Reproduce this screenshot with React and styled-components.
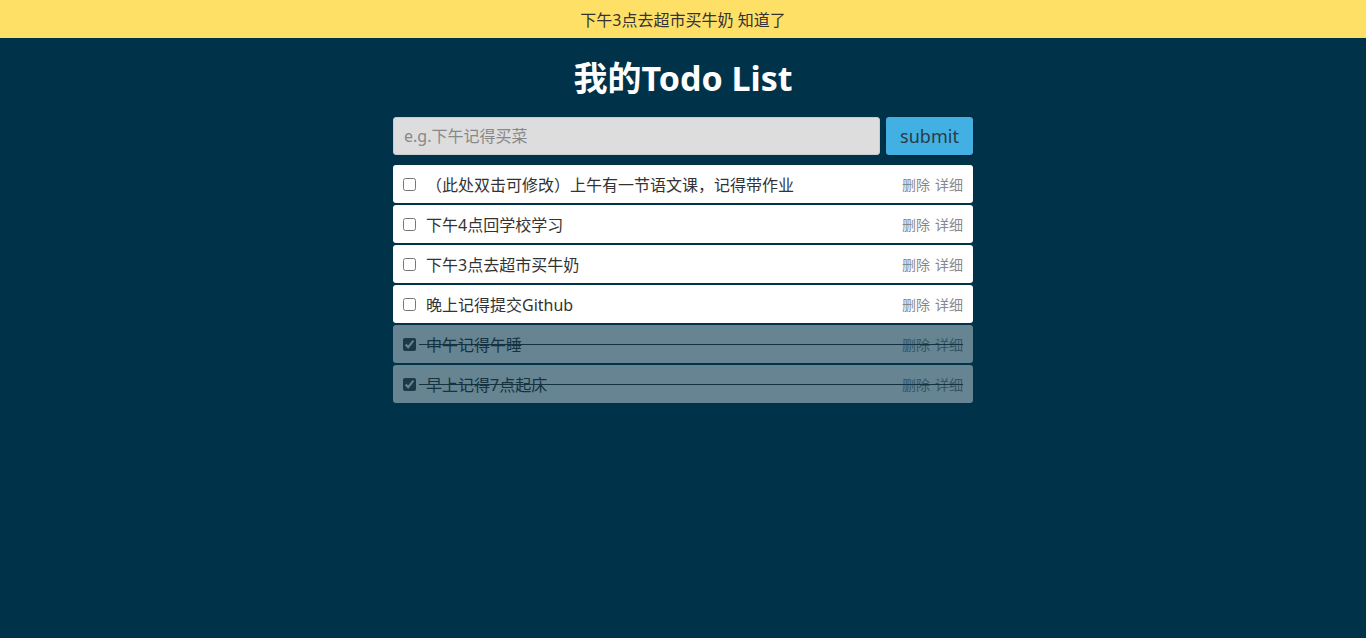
import React, { useState } from 'react'
import styled, { createGlobalStyle } from 'styled-components'

const GlobalStyle = createGlobalStyle`
  html, body {
    margin: 0;
    padding: 0;
    background: #003249;
    font-family: "Noto Sans", "Noto Sans CJK SC", sans-serif;
  }
`

const Page = styled.div`
  min-height: 638px;
  background: #003249;
`

const Notice = styled.div`
  height: 38px;
  background: #ffe066;
  color: #333;
  font-size: 16px;
  display: flex;
  align-items: center;
  justify-content: center;
`

const Container = styled.div`
  width: 580px;
  margin: 0 auto;
`

const Title = styled.h1`
  margin: 0;
  padding-top: 17px;
  height: 62px;
  box-sizing: border-box;
  text-align: center;
  color: #fff;
  font-size: 34px;
  font-weight: 700;
  line-height: 46px;
`

const Form = styled.form`
  display: flex;
  gap: 6px;
  margin-top: 17px;
  margin-bottom: 10px;
`

const Input = styled.input`
  flex: 1;
  height: 38px;
  box-sizing: border-box;
  border: 1px solid #ccc;
  border-radius: 3px;
  background: #ddd;
  padding: 0 10px;
  font-size: 16px;
  font-family: inherit;
  color: #333;
  outline: none;
  &::placeholder {
    color: #888;
  }
`

const Button = styled.button`
  width: 87px;
  height: 38px;
  border: none;
  border-radius: 3px;
  background: #42b0e3;
  color: #2b3b47;
  font-size: 18px;
  font-family: inherit;
  box-shadow: 0 1px 3px rgba(0, 0, 0, 0.35);
  cursor: pointer;
`

const List = styled.ul`
  list-style: none;
  margin: 0;
  padding: 0;
  display: flex;
  flex-direction: column;
  gap: 2px;
`

const Row = styled.li`
  position: relative;
  height: 38px;
  box-sizing: border-box;
  display: flex;
  align-items: center;
  padding: 0 10px;
  background: #fff;
  border-radius: 3px;
  opacity: ${p => (p.$done ? 0.4 : 1)};
  &::after {
    content: '';
    display: ${p => (p.$done ? 'block' : 'none')};
    position: absolute;
    left: 26px;
    right: 10px;
    top: 19px;
    height: 1px;
    background: #333;
  }
`

const Check = styled.input`
  margin: 0;
  width: 13px;
  height: 13px;
  accent-color: #444;
`

const Label = styled.span`
  flex: 1;
  margin-left: 10px;
  font-size: 16px;
  color: #333;
`

const Actions = styled.span`
  display: flex;
  gap: 5px;
  font-size: 14px;
  color: #888;
`

const todos = [
  { id: 1, text: '（此处双击可修改）上午有一节语文课，记得带作业', done: false },
  { id: 2, text: '下午4点回学校学习', done: false },
  { id: 3, text: '下午3点去超市买牛奶', done: false },
  { id: 4, text: '晚上记得提交Github', done: false },
  { id: 5, text: '中午记得午睡', done: true },
  { id: 6, text: '早上记得7点起床', done: true }
]

const App = () => {
  const [items, setItems] = useState(todos)
  const toggle = id =>
    setItems(items.map(t => (t.id === id ? { ...t, done: !t.done } : t)))

  return (
    <Page>
      <GlobalStyle />
      <Notice>下午3点去超市买牛奶 知道了</Notice>
      <Container>
        <Title>我的Todo List</Title>
        <Form onSubmit={e => e.preventDefault()}>
          <Input placeholder="e.g.下午记得买菜" />
          <Button type="submit">submit</Button>
        </Form>
        <List>
          {items.map(t => (
            <Row key={t.id} $done={t.done}>
              <Check type="checkbox" checked={t.done} onChange={() => toggle(t.id)} />
              <Label>{t.text}</Label>
              <Actions>
                <span>删除</span>
                <span>详细</span>
              </Actions>
            </Row>
          ))}
        </List>
      </Container>
    </Page>
  )
}

export default App
